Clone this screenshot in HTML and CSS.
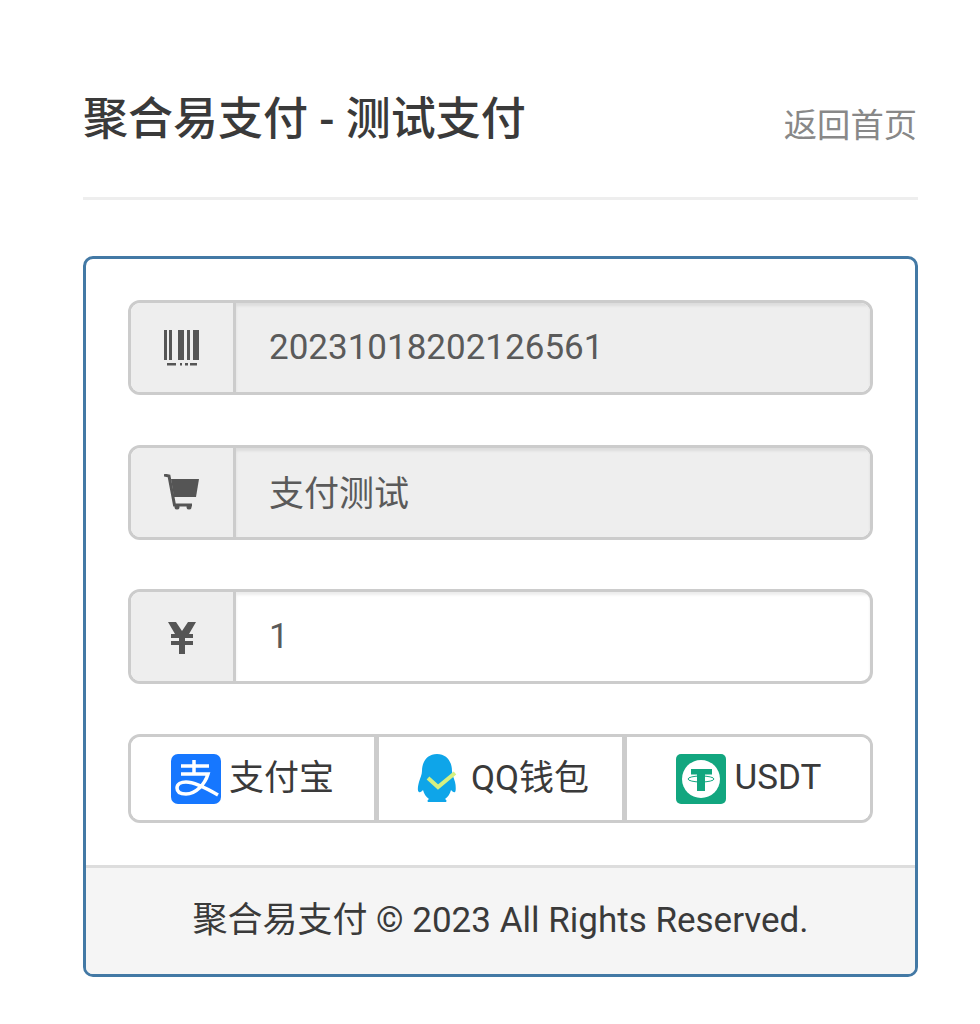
FILE: index.html
```html
<!DOCTYPE html>
<html lang="zh-CN">
<head>
<meta charset="utf-8">
<title>聚合易支付 - 测试支付</title>
<link rel="stylesheet" href="styles.css">
</head>
<body>
<div class="container">
  <header class="page-header">
    <h1 class="title">聚合易支付 - 测试支付</h1>
    <a class="home-link">返回首页</a>
  </header>
  <section class="panel">
    <div class="panel-body">
      <div class="field">
        <span class="addon">
          <svg class="icon" width="38" height="36" viewBox="0 0 38 36"><path fill="#555" d="M1 0h3v30H1zM6 0h3v30H6zM15 0h6v30h-6zM24 0h3v30h-3zM30 0h6v30h-6zM4 33h9v2.500H4zM17 33h2v2.500h-2zM22 33h3v2.500h-3zM27 33h7v2.500h-7z"/></svg>
        </span>
        <span class="value value-disabled">20231018202126561</span>
      </div>
      <div class="field">
        <span class="addon">
          <svg class="icon" width="36" height="36" viewBox="0 0 36 36"><path fill="#555" d="M7 5h28l-3 18H10z"/><path fill="none" stroke="#555" stroke-width="3" d="M0 1l5 1 5.500 29H28"/><circle cx="13" cy="33" r="2.500" fill="#555"/><circle cx="25" cy="33" r="2.500" fill="#555"/></svg>
        </span>
        <span class="value value-disabled value-cjk">支付测试</span>
      </div>
      <div class="field">
        <span class="addon">
          <svg class="icon" width="28" height="34" viewBox="0 0 28 34"><path fill="#555" d="M0 2h8l6 9 6-9h8l-7 12h4v4h-8v3h8v4h-8v9h-6v-9H3v-4h8v-3H3v-4h4z"/></svg>
        </span>
        <span class="value">1</span>
      </div>
      <div class="pay-group">
        <button class="pay-btn" type="button">
          <svg class="pay-icon" width="50" height="50" viewBox="0 0 50 50"><rect width="50" height="50" rx="7" fill="#1677ff"/><path d="M10 12h28M23 6v13M10 20h27c-3 10-12 20-22 20-7 0-9-3-9-6 0-4 4-6 9-6 9 0 20 6 32 13" fill="none" stroke="#fff" stroke-width="3.500"/></svg>
          <span class="pay-label">支付宝</span>
        </button>
        <button class="pay-btn pay-btn-qq" type="button">
          <svg class="pay-icon" width="44" height="50" viewBox="0 0 44 50"><path fill="#0ea5e9" d="M20 0c10 0 15 8 15 17 0 4 2 7 3 11s1 9 0 10c-1 1-3-1-4-2-1 4-3 7-6 9 2 1 2 3 0 3H12c-2 0-2-2 0-3-3-2-5-5-6-9-1 1-3 3-4 2-2-1-1-6 0-10s3-7 3-11C5 8 10 0 20 0z"/><path fill="none" stroke="#d5f080" stroke-width="4" d="M11 24l10 9 17-14"/></svg>
          <span class="pay-label">QQ钱包</span>
        </button>
        <button class="pay-btn pay-btn-usdt" type="button">
          <svg class="pay-icon" width="50" height="50" viewBox="0 0 50 50"><rect width="50" height="50" rx="5" fill="#12a67f"/><circle cx="25" cy="25" r="19" fill="#fff"/><path fill="#12a67f" d="M15 15h21v5.500h-7V37h-8V20.500h-6z"/><ellipse cx="25" cy="25" rx="13" ry="3" fill="none" stroke="#12a67f" stroke-width="1"/></svg>
          <span class="pay-label pay-label-latin">USDT</span>
        </button>
      </div>
    </div>
    <footer class="panel-footer"><span class="footer-text">聚合易支付 © 2023 All Rights Reserved.</span></footer>
  </section>
</div>
</body>
</html>
```

FILE: styles.css
```css
* { box-sizing: border-box; }
html, body { margin: 0; background: #fff; }
body {
  height: 1024px;
  overflow: hidden;
  font-family: Roboto, "Noto Sans CJK SC", sans-serif;
  color: #333;
}
.container { padding: 83px 62px 0 83px; }
.page-header {
  display: flex;
  justify-content: space-between;
  align-items: center;
  height: 117px;
  border-bottom: 3px solid #eee;
  margin-bottom: 56px;
  padding-bottom: 41px;
}
.title {
  margin: 0;
  font-size: 45px;
  font-weight: 500;
  line-height: 74px;
  color: #3a3a3a;
}
.home-link {
  font-size: 33.300px;
  line-height: 44px;
  color: #888;
  margin: 13px 1px 0 0;
}
.panel {
  border: 3px solid #4379a5;
  border-radius: 10px;
  overflow: hidden;
  height: 721px;
  display: flex;
  flex-direction: column;
}
.panel-body {
  flex: 1;
  padding: 41px 42px 0;
  display: flex;
  flex-direction: column;
}
.field {
  display: flex;
  height: 95px;
  margin-bottom: 49.500px;
  border: 3px solid #ccc;
  border-radius: 12px;
  overflow: hidden;
}
.addon {
  width: 105px;
  background: #eee;
  border-right: 3px solid #ccc;
  display: flex;
  align-items: center;
  justify-content: center;
}
.value {
  flex: 1;
  display: flex;
  align-items: center;
  padding-left: 33px;
  font-size: 35px;
  color: #5a5a5a;
  box-shadow: inset 0 3px 3px rgba(0,0,0,.075);
}
.value-disabled { background: #eee; }
.value-cjk { padding-bottom: 4px; }
.pay-group {
  display: flex;
  height: 89px;
  border: 3px solid #ccc;
  border-radius: 12px;
  overflow: hidden;
}
.pay-btn {
  flex: 1;
  display: flex;
  align-items: center;
  justify-content: center;
  gap: 8px;
  padding: 2px 0 0;
  border: 0;
  border-right: 5px solid #ccc;
  background: #fff;
  font-family: inherit;
  font-size: 35px;
  color: #3a3a3a;
}
.pay-btn-qq { gap: 10px; }
.pay-btn-qq .pay-icon { margin-left: 5px; }
.pay-btn-usdt { gap: 9px; }
.pay-btn:last-child { border-right: 0; }
.pay-label { padding-bottom: 10px; }
.pay-label-latin { padding-bottom: 4px; }
.panel-footer {
  height: 109px;
  background: #f5f5f5;
  border-top: 3px solid #ddd;
  display: flex;
  align-items: center;
  justify-content: center;
  font-size: 35px;
  color: #3a3a3a;
}
.footer-text { padding-bottom: 10px; }
```
